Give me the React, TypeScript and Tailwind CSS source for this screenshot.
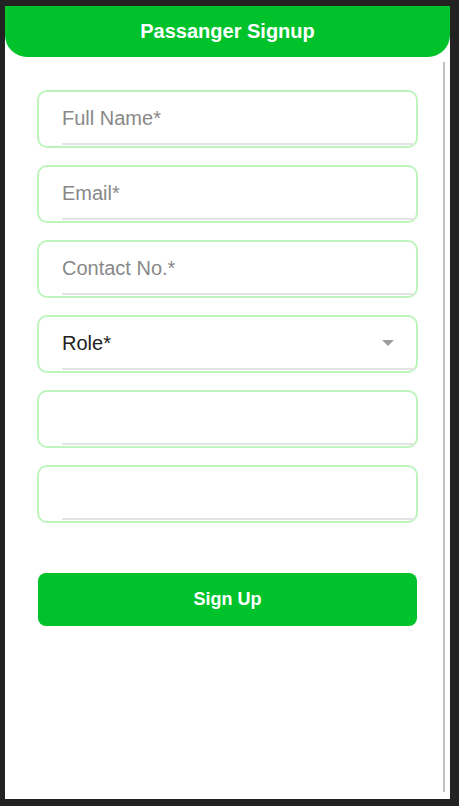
import React from "react";

const fields = [
  { label: "Full Name*", kind: "placeholder" },
  { label: "Email*", kind: "placeholder" },
  { label: "Contact No.*", kind: "placeholder" },
  { label: "Role*", kind: "select" },
  { label: "", kind: "empty" },
  { label: "", kind: "empty" },
];

const Field: React.FC<{ label: string; kind: string }> = ({ label, kind }) => (
  <div className="relative h-[58px] rounded-[10px] border-2 border-[#bdf5bd] flex items-center pl-[23px] pr-[22px] pb-[2px]">
    <span
      className={
        kind === "select"
          ? "text-[20px] text-[#222]"
          : "text-[20px] text-[#888]"
      }
    >
      {label}
    </span>
    {kind === "select" && (
      <span className="ml-auto w-0 h-0 border-l-[6px] border-r-[6px] border-t-[6px] border-l-transparent border-r-transparent border-t-[#9e9e9e]" />
    )}
    {/* underline */}
    <div className="absolute left-[23px] right-[1px] bottom-[1px] h-[2px] bg-[#e4e4e4]" />
  </div>
);

export default function App() {
  return (
    <div
      className="h-[806px] w-full bg-[#222222] pt-[6px] pl-[5px] pr-[9px] pb-[7px]"
      style={{ fontFamily: '"Liberation Sans", Arial, sans-serif' }}
    >
      <div className="relative h-full bg-white flex flex-col">
        <div className="h-[51px] shrink-0 bg-[#00c32c] rounded-b-[22px] flex items-center justify-center pb-[2px]">
          <h1 className="text-white font-bold text-[20px]">Passanger Signup</h1>
        </div>

        <div className="px-[32px] pt-[33px] flex flex-col gap-[17px]">
          {fields.map((f, i) => (
            <Field key={i} label={f.label} kind={f.kind} />
          ))}
          <button className="mt-[33px] mx-[1px] h-[53px] rounded-[8px] bg-[#00c32c] text-white font-bold text-[18px]">
            Sign Up
          </button>
        </div>

        {/* scrollbar */}
        <div className="absolute right-[5px] top-[56px] bottom-[7px] w-[2px] bg-[#c1c1c1]" />
      </div>
    </div>
  );
}
